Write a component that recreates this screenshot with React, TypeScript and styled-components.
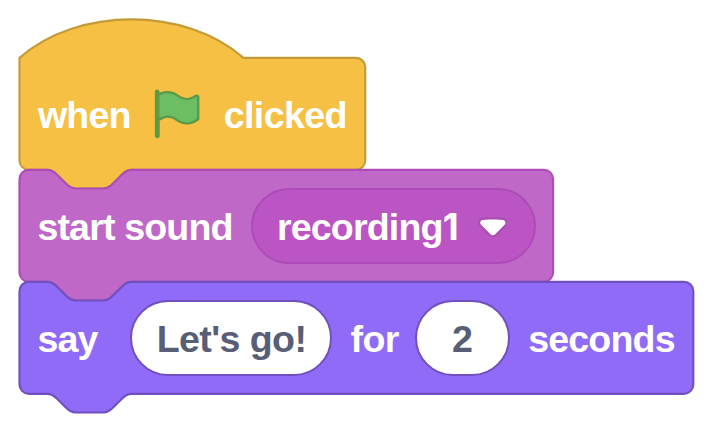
import React from "react";
import styled, { createGlobalStyle } from "styled-components";

const UNIT = 7 / 3;

const GlobalStyle = createGlobalStyle`
  * { box-sizing: border-box; }
  body { margin: 0; background: #fff; }
`;

const Workspace = styled.main`
  display: flex;
  flex-direction: column;
  align-items: flex-start;
  width: 713px;
  height: 432px;
  padding: 58px 0 0 19px;
  overflow: hidden;
  font-family: "Liberation Sans", Arial, sans-serif;
`;

const Block = styled.section<{ $width: number }>`
  position: relative;
  flex: none;
  display: flex;
  align-items: center;
  width: ${(p) => p.$width * UNIT}px;
  height: 112px;
`;

const BlockShape = styled.svg<{ $width: number }>`
  position: absolute;
  top: 0;
  left: 0;
  width: ${(p) => p.$width * UNIT}px;
  height: 112px;
  overflow: visible;
`;

const Label = styled.span<{ $start?: number; $width: number; $tracking?: number; $dark?: boolean }>`
  position: relative;
  flex: none;
  width: ${(p) => p.$width}px;
  margin-left: ${(p) => p.$start ?? 0}px;
  padding-top: 2px;
  color: ${(p) => (p.$dark ? "#575e75" : "#fff")};
  font-size: 37.6px;
  font-weight: 700;
  line-height: 44px;
  letter-spacing: ${(p) => p.$tracking ?? 0}px;
  white-space: pre;
`;

const Digit = styled.span`
  font-family: Inter, sans-serif;
  font-size: 37px;
`;

const Pill = styled.div<{ $start: number; $width: number; $fill: string; $line: string }>`
  position: relative;
  flex: none;
  display: flex;
  align-items: center;
  width: ${(p) => p.$width}px;
  height: 76px;
  margin-left: ${(p) => p.$start}px;
  border: 2px solid ${(p) => p.$line};
  border-radius: 38px;
  background: ${(p) => p.$fill};
`;

const FlagIcon = styled.svg`
  position: relative;
  flex: none;
  width: 56px;
  height: 56px;
  margin-left: 18.4px;
`;

const ArrowIcon = styled.svg`
  flex: none;
  width: 29.66px;
  height: 20.5px;
  margin: 3px 0 0 18.6px;
`;

const NOTCH = "H12c2 0 3 1 4 2l4 4c1 1 2 2 4 2h12c2 0 3-1 4-2l4-4c1-1 2-2 4-2";
const TAB = "H48c-2 0-3 1-4 2l-4 4c-1 1-2 2-4 2H24c-2 0-3-1-4-2l-4-4c-1-1-2-2-4-2H4a4 4 0 0 1-4-4";

type ShapeProps = { width: number; hat?: boolean; fill: string; line: string };

function Shape({ width, hat, fill, line }: ShapeProps) {
  const top = hat ? "M0 0c25-22 71-22 96 0" : `M0 4A4 4 0 0 1 4 0${NOTCH}`;
  return (
    <BlockShape $width={width} viewBox={`-0.2 0.06 ${width} 48`} preserveAspectRatio="none" aria-hidden>
      <path d={`${top}H${width - 4}a4 4 0 0 1 4 4v40a4 4 0 0 1-4 4${TAB}z`} fill={fill} stroke={line} strokeWidth="0.9" />
    </BlockShape>
  );
}

export default function App() {
  return (
    <>
      <GlobalStyle />
      <Workspace>
        <Block $width={148.2}>
          <Shape width={148.2} hat fill="#f6c044" line="#c39a35" />
          <Label $start={19} $width={93} $tracking={-0.9}>when</Label>
          <FlagIcon viewBox="0 0 24 24" aria-label="green flag">
            <path d="M20.8 3.7c-.4-.2-.9-.1-1.2.2-2 1.6-4.8 1.6-6.8 0-2.3-1.9-5.6-2.3-8.3-1v-.4c0-.6-.5-1-1-1s-1 .4-1 1v18.8c0 .5.5 1 1 1h.1c.5 0 1-.4 1-1v-6.4c1-.7 2.1-1.2 3.4-1.3 1.2 0 2.4.4 3.4 1.2 2.9 2.3 7 2.3 9.8 0 .3-.2.4-.5.4-.9V4.7c0-.5-.3-.9-.8-1z" fill="#5a9a48" />
            <path d="M20.5 13.9C18 16 14.4 16 11.9 14c-1.1-.9-2.5-1.4-4-1.4-1.2.1-2.3.5-3.4 1.1V4c2.5-1.4 5.5-1.1 7.7.6 2.4 1.9 5.7 1.9 8.1 0h.2l.1.1z" fill="#6cbd63" />
          </FlagIcon>
          <Label $start={18.3} $width={124} $tracking={-0.6}>clicked</Label>
        </Block>
        <Block $width={228.7}>
          <Shape width={228.7} fill="#c068c8" line="#ad4cb8" />
          <Label $start={18.4} $width={196} $tracking={-0.85}>start sound</Label>
          <Pill $start={17.6} $width={285} $fill="#bb55c3" $line="#ad4cb8">
            <Label $start={24} $width={182} $tracking={-0.85}>recording<Digit>1</Digit></Label>
            <ArrowIcon viewBox="0 0 12.71 8.79" aria-hidden>
              <path d="M12.71 2.44A2.41 2.41 0 0 1 12 4.16L8.08 8.08a2.45 2.45 0 0 1-3.45 0L.72 4.16A2.42 2.42 0 0 1 0 2.44 2.48 2.48 0 0 1 .71.71C1 .47 1.43 0 6.36 0S11.75.46 12 .71a2.44 2.44 0 0 1 .71 1.73z" fill="#231f20" opacity=".1" />
              <path d="M6.36 7.79a1.43 1.43 0 0 1-1-.42L1.42 3.45a1.44 1.44 0 0 1 0-2c.56-.56 9.31-.56 9.87 0a1.44 1.44 0 0 1 0 2L7.37 7.37a1.43 1.43 0 0 1-1.01.42z" fill="#fff" />
            </ArrowIcon>
          </Pill>
        </Block>
        <Block $width={288.8}>
          <Shape width={288.8} fill="#8f6bf7" line="#7050be" />
          <Label $start={18.4} $width={62} $tracking={-0.9}>say</Label>
          <Pill $start={31} $width={202} $fill="#fff" $line="#7050be">
            <Label $dark $start={24.3} $width={150} $tracking={-0.6}>{"Let's go!"}</Label>
          </Pill>
          <Label $start={18} $width={49} $tracking={-0.5}>for</Label>
          <Pill $start={15.6} $width={95} $fill="#fff" $line="#7050be">
            <Label $dark $start={35} $width={22}>2</Label>
          </Pill>
          <Label $start={18.2} $width={148} $tracking={-0.85}>seconds</Label>
        </Block>
      </Workspace>
    </>
  );
}
